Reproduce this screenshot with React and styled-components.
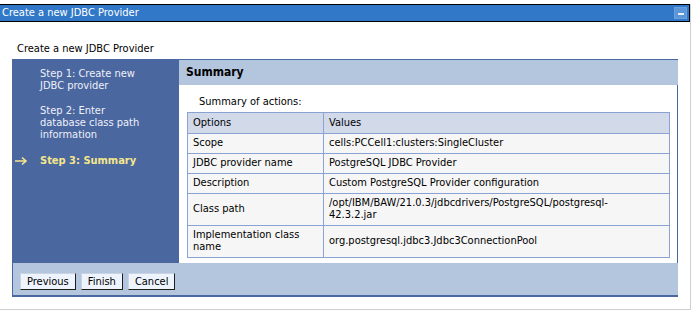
import React from 'react'
import styled, { createGlobalStyle } from 'styled-components'

const GlobalStyle = createGlobalStyle`
  html, body {
    margin: 0;
    padding: 0;
    background: #ffffff;
  }
  body {
    font-family: "DejaVu Sans Condensed", "DejaVu Sans", Verdana, sans-serif;
    font-size: 11px;
    color: #000;
  }
`

const rows = [
  { option: 'Scope', value: 'cells:PCCell1:clusters:SingleCluster' },
  { option: 'JDBC provider name', value: 'PostgreSQL JDBC Provider' },
  { option: 'Description', value: 'Custom PostgreSQL Provider configuration' },
  { option: 'Class path', value: '/opt/IBM/BAW/21.0.3/jdbcdrivers/PostgreSQL/postgresql-\n42.3.2.jar' },
  { option: 'Implementation class\nname', value: 'org.postgresql.jdbc3.Jdbc3ConnectionPool' },
]

const steps = [
  { label: 'Step 1: Create new\nJDBC provider' },
  { label: 'Step 2: Enter\ndatabase class path\ninformation' },
  { label: 'Step 3: Summary', current: true },
]

const App = () => {
  return (
    <>
      <GlobalStyle />
      <Dialog>
        <TitleBar>
          <span>Create a new JDBC Provider</span>
          <MinButton><span /></MinButton>
        </TitleBar>
        <Content>
          <Subtitle>Create a new JDBC Provider</Subtitle>
          <Wizard>
            <Nav>
              {steps.map((s) => (
                <Step key={s.label} current={s.current}>
                  <Arrow>
                    {s.current && (
                      <svg width="14" height="10" viewBox="0 0 14 10">
                        <path d="M1 5 H12 M8 1.5 L12 5 L8 8.5" fill="none" stroke="#f6e68a" strokeWidth="1.6" />
                      </svg>
                    )}
                  </Arrow>
                  <StepText>{s.label}</StepText>
                </Step>
              ))}
            </Nav>
            <Panel>
              <PanelHeader>Summary</PanelHeader>
              <PanelBody>
                <Caption>Summary of actions:</Caption>
                <Table>
                  <thead>
                    <tr>
                      <Th>Options</Th>
                      <Th>Values</Th>
                    </tr>
                  </thead>
                  <tbody>
                    {rows.map((r) => (
                      <tr key={r.option}>
                        <Td>{r.option}</Td>
                        <Td>{r.value}</Td>
                      </tr>
                    ))}
                  </tbody>
                </Table>
              </PanelBody>
            </Panel>
            <ButtonBar>
              <Button>Previous</Button>
              <Button>Finish</Button>
              <Button>Cancel</Button>
            </ButtonBar>
          </Wizard>
        </Content>
      </Dialog>
    </>
  )
}

const Dialog = styled.div`
  margin-top: 4px;
  width: 691px;
  height: 306px;
  box-sizing: border-box;
  border-right: 1px solid #cfcfcf;
  border-bottom: 1px solid #cfcfcf;
`

const TitleBar = styled.div`
  height: 16px;
  box-sizing: content-box;
  border: 1px solid #000;
  border-left: none;
  background: #3179c8;
  color: #fff;
  display: flex;
  align-items: center;
  justify-content: space-between;
  padding: 0 1px 0 2px;
  line-height: 16px;
`

const MinButton = styled.div`
  width: 13px;
  height: 12px;
  margin-right: 1px;
  background: #5b96d8;
  border: 1px solid #6aa0dc;
  box-sizing: border-box;
  display: flex;
  align-items: flex-end;
  justify-content: center;
  padding-bottom: 3px;
  span {
    display: block;
    width: 6px;
    height: 2px;
    background: #e8f0fa;
  }
`

const Content = styled.div`
  padding: 0 12px 0 12px;
`

const Subtitle = styled.div`
  padding: 20px 0 0 5px;
  height: 17px;
  line-height: 13px;
`

const Wizard = styled.div`
  display: grid;
  grid-template-columns: 166px 1fr;
  grid-template-rows: 203px auto;
  border-top: 1px solid #4a67a0;
  border-left: 1px solid #4a67a0;
  border-right: 1px solid #4a67a0;
  width: 666px;
  box-sizing: border-box;
`

const Nav = styled.div`
  background: #4b67a0;
  padding: 8px 0 0 0;
  display: flex;
  flex-direction: column;
  gap: 13px;
`

const Step = styled.div`
  display: flex;
  align-items: flex-start;
  color: ${({ current }) => (current ? '#f6e68a' : '#eef0f8')};
  font-weight: ${({ current }) => (current ? 'bold' : 'normal')};
  margin-top: ${({ current }) => (current ? '1px' : '0')};
`

const Arrow = styled.div`
  width: 26px;
  height: 12px;
  display: flex;
  align-items: center;
  padding-left: 1px;
`

const StepText = styled.div`
  white-space: pre-line;
  line-height: 12px;
`

const Panel = styled.div`
  display: flex;
  flex-direction: column;
`

const PanelHeader = styled.div`
  background: #b4c5de;
  height: 25px;
  line-height: 25px;
  padding-left: 7px;
  font-weight: bold;
  font-size: 12px;
`

const PanelBody = styled.div`
  padding: 10px 8px 0 8px;
`

const Caption = styled.div`
  padding-left: 12px;
  height: 17px;
`

const Table = styled.table`
  border-collapse: collapse;
  width: 483px;
  border: 1px solid #8aa3d4;
  td:first-child, th:first-child {
    width: 125px;
  }
`

const Th = styled.th`
  background: #d2daea;
  text-align: left;
  font-weight: normal;
  border: 1px solid #8aa3d4;
  padding: 4px 5px 4px 5px;
  line-height: 12px;
`

const Td = styled.td`
  background: #f6f6f6;
  border: 1px solid #8aa3d4;
  padding: 3px 5px 4px 5px;
  white-space: pre-line;
  line-height: 12px;
  vertical-align: middle;
`

const ButtonBar = styled.div`
  grid-column: 1 / 3;
  background: #b4c5de;
  border-bottom: 2px solid #4a67a0;
  height: 32px;
  display: flex;
  align-items: center;
  gap: 5px;
  padding: 0 0 0 7px;
`

const Button = styled.button`
  font-family: inherit;
  font-size: 11px;
  height: 17px;
  padding: 0 6px;
  background: #eef4fd;
  color: #000;
  border: 1px solid;
  border-color: #c9d3e4 #1e1e1e #1e1e1e #c9d3e4;
  line-height: 13px;
  margin-top: 4px;
`

export default App
